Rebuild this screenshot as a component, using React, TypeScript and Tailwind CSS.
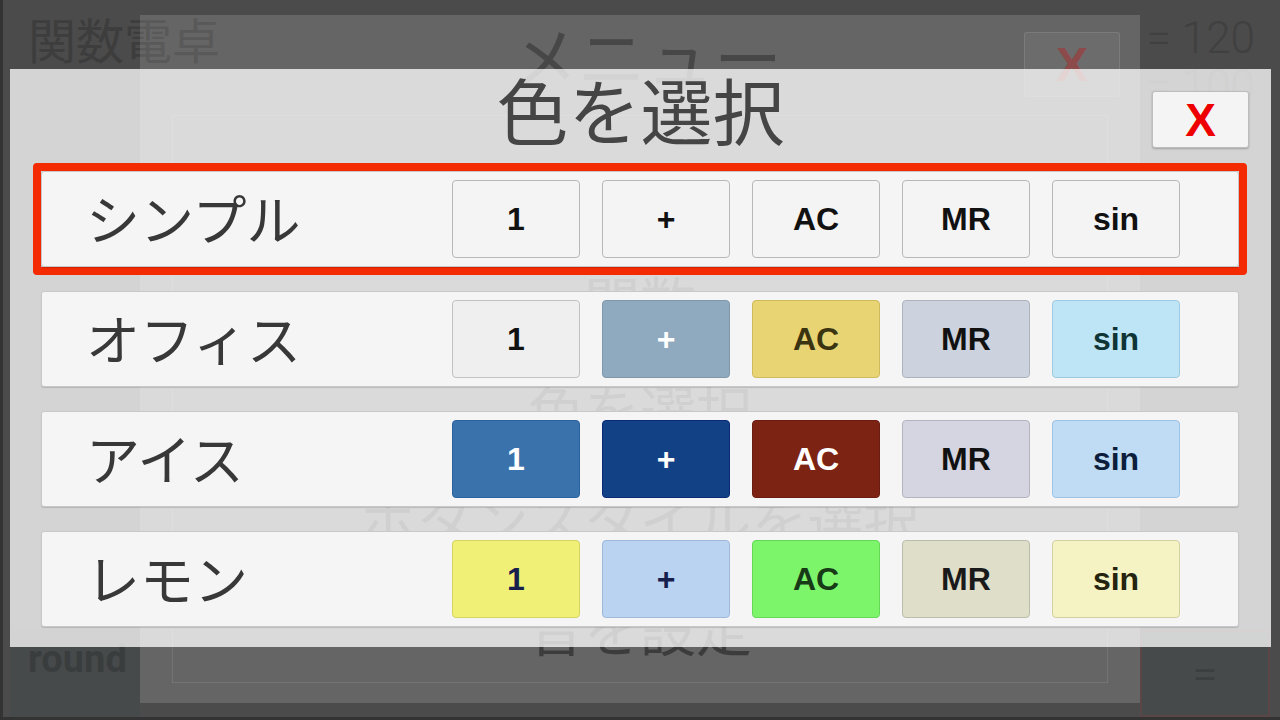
const jp = { fontFamily: '"Noto Sans CJK JP", "Noto Sans", sans-serif' };
const lat = { fontFamily: '"Liberation Sans", Arial, sans-serif' };

type Key = { label: string; bg: string };

const themes: { name: string; keys: Key[] }[] = [
  {
    name: "シンプル",
    keys: [
      { label: "1", bg: "bg-[#f4f4f4] border-[#b8b8b8] text-[#111]" },
      { label: "+", bg: "bg-[#f4f4f4] border-[#b8b8b8] text-[#111]" },
      { label: "AC", bg: "bg-[#f4f4f4] border-[#b8b8b8] text-[#111]" },
      { label: "MR", bg: "bg-[#f4f4f4] border-[#b8b8b8] text-[#111]" },
      { label: "sin", bg: "bg-[#f4f4f4] border-[#b8b8b8] text-[#111]" },
    ],
  },
  {
    name: "オフィス",
    keys: [
      { label: "1", bg: "bg-[#efefef] border-[#c2c2c2] text-[#111]" },
      { label: "+", bg: "bg-[#8faabe] border-[#7f98ab] text-white" },
      { label: "AC", bg: "bg-[#e9d473] border-[#cfbb5e] text-[#3b3410]" },
      { label: "MR", bg: "bg-[#ccd3de] border-[#adb3bd] text-[#111]" },
      { label: "sin", bg: "bg-[#bee5f5] border-[#9fcbe0] text-[#0f3436]" },
    ],
  },
  {
    name: "アイス",
    keys: [
      { label: "1", bg: "bg-[#3a72ab] border-[#2d62a0] text-white" },
      { label: "+", bg: "bg-[#124185] border-[#0a2a78] text-white" },
      { label: "AC", bg: "bg-[#7d2314] border-[#6a1c10] text-white" },
      { label: "MR", bg: "bg-[#d4d5e0] border-[#b3b4bf] text-[#111]" },
      { label: "sin", bg: "bg-[#c0dcf5] border-[#9fc3e6] text-[#0c1e3c]" },
    ],
  },
  {
    name: "レモン",
    keys: [
      { label: "1", bg: "bg-[#f1f076] border-[#d6d45e] text-[#17204d]" },
      { label: "+", bg: "bg-[#b9d3f0] border-[#9db9da] text-[#17204d]" },
      { label: "AC", bg: "bg-[#7df56b] border-[#66d858] text-[#173a17]" },
      { label: "MR", bg: "bg-[#dedec9] border-[#bcbcab] text-[#1a1a1a]" },
      { label: "sin", bg: "bg-[#f5f3c3] border-[#d2cfa0] text-[#24240f]" },
    ],
  },
];

const menuItems = ["普通の電卓", "関数", "色を選択", "ボタンスタイルを選択", "音を設定"];

export default function App() {
  return (
    <div className="relative w-[1280px] h-[720px] overflow-hidden bg-[#4b4b4b] border-l-[3px] border-b-[3px] border-[#333333] flex flex-col">
      {/* base calculator, dimmed */}
      <div className="flex justify-between px-[25px] pt-[14px]">
        <div className="text-[48px] leading-none text-[#3d3d3d]" style={jp}>
          関数電卓
        </div>
        <div className="flex flex-col items-end text-[44px] leading-[48px] font-light text-[#404040]" style={{ fontFamily: "Roboto, sans-serif" }}>
          <span>= 120</span>
          <span>= 100</span>
        </div>
      </div>
      <div className="flex-1" />
      <div className="flex justify-between pl-[7px] pr-[10px] h-[87px]">
        <div className="w-[130px] bg-[#474a4b] flex items-start pt-[10px] pl-[18px]">
          <span className="text-[38px] font-bold leading-none text-[#3a3d3e]" style={{ fontFamily: "Roboto, sans-serif" }}>
            round
          </span>
        </div>
        <div className="w-[130px] bg-[#464a4a] border-2 border-[#5a4646] flex items-center justify-center">
          <span className="text-[40px] text-[#3c3f40]">=</span>
        </div>
      </div>

      {/* menu dialog, dimmed */}
      <div className="absolute left-[137px] top-[15px] w-[1000px] h-[688px] bg-white/15 flex flex-col">
        <div className="relative h-[100px] flex justify-center pt-[6px]">
          <div className="text-[68px] leading-none text-[#474747] pl-[12px]" style={jp}>
            メニュー
          </div>
          <div className="absolute right-[20px] top-[17px] w-[96px] h-[65px] bg-white/5 border border-white/10 rounded-[3px] flex items-center justify-center">
            <span className="text-[48px] font-bold leading-none text-[#8c4a4a]" style={lat}>
              X
            </span>
          </div>
        </div>
        <div className="mx-[32px] h-[568px] border border-white/10 flex flex-col pt-[20px]">
          {menuItems.map((m) => (
            <div key={m} className="h-[119px] flex items-center justify-center text-[56px] leading-none text-[#3c3c3c]" style={jp}>
              {m}
            </div>
          ))}
        </div>
      </div>

      {/* color select dialog */}
      <div className="absolute left-[7px] top-[69px] w-[1261px] h-[578px] bg-white/[0.76] flex flex-col">
        <div className="grid grid-cols-[1fr_auto_1fr] h-[94px]">
          <div />
          <div className="text-[72px] leading-none text-[#454545] pt-[3px]" style={jp}>
            色を選択
          </div>
          <div className="flex justify-end items-start pr-[22px] pt-[22px]">
            <div className="w-[97px] h-[57px] bg-[#f4f4f4] border border-[#bdbdbd] rounded-[3px] shadow-[0_1px_2px_rgba(0,0,0,0.25)] flex items-center justify-center">
              <span className="text-[46px] font-bold leading-none text-[#ee0000]" style={lat}>
                X
              </span>
            </div>
          </div>
        </div>
        <div className="flex flex-col gap-[8px] pl-[23px]">
          {themes.map((t, i) => (
            <div
              key={t.name}
              className={`w-[1214px] h-[112px] border-[8px] rounded-[4px] ${i === 0 ? "border-[#f42a00]" : "border-transparent"}`}
            >
              <div className="h-[96px] bg-[#f5f5f5] border border-[#c8c8c8] rounded-[3px] shadow-[0_1px_1px_rgba(0,0,0,0.15)] flex items-center pl-[44px]">
                <div className="w-[366px] text-[54px] leading-none text-[#383838] pb-[3px]" style={jp}>
                  {t.name}
                </div>
                <div className="flex gap-[22px]">
                  {t.keys.map((k) => (
                    <div
                      key={k.label}
                      className={`w-[128px] h-[78px] border rounded-[4px] flex items-center justify-center text-[32px] font-bold ${k.bg}`}
                      style={lat}
                    >
                      {k.label}
                    </div>
                  ))}
                </div>
              </div>
            </div>
          ))}
        </div>
      </div>
    </div>
  );
}
